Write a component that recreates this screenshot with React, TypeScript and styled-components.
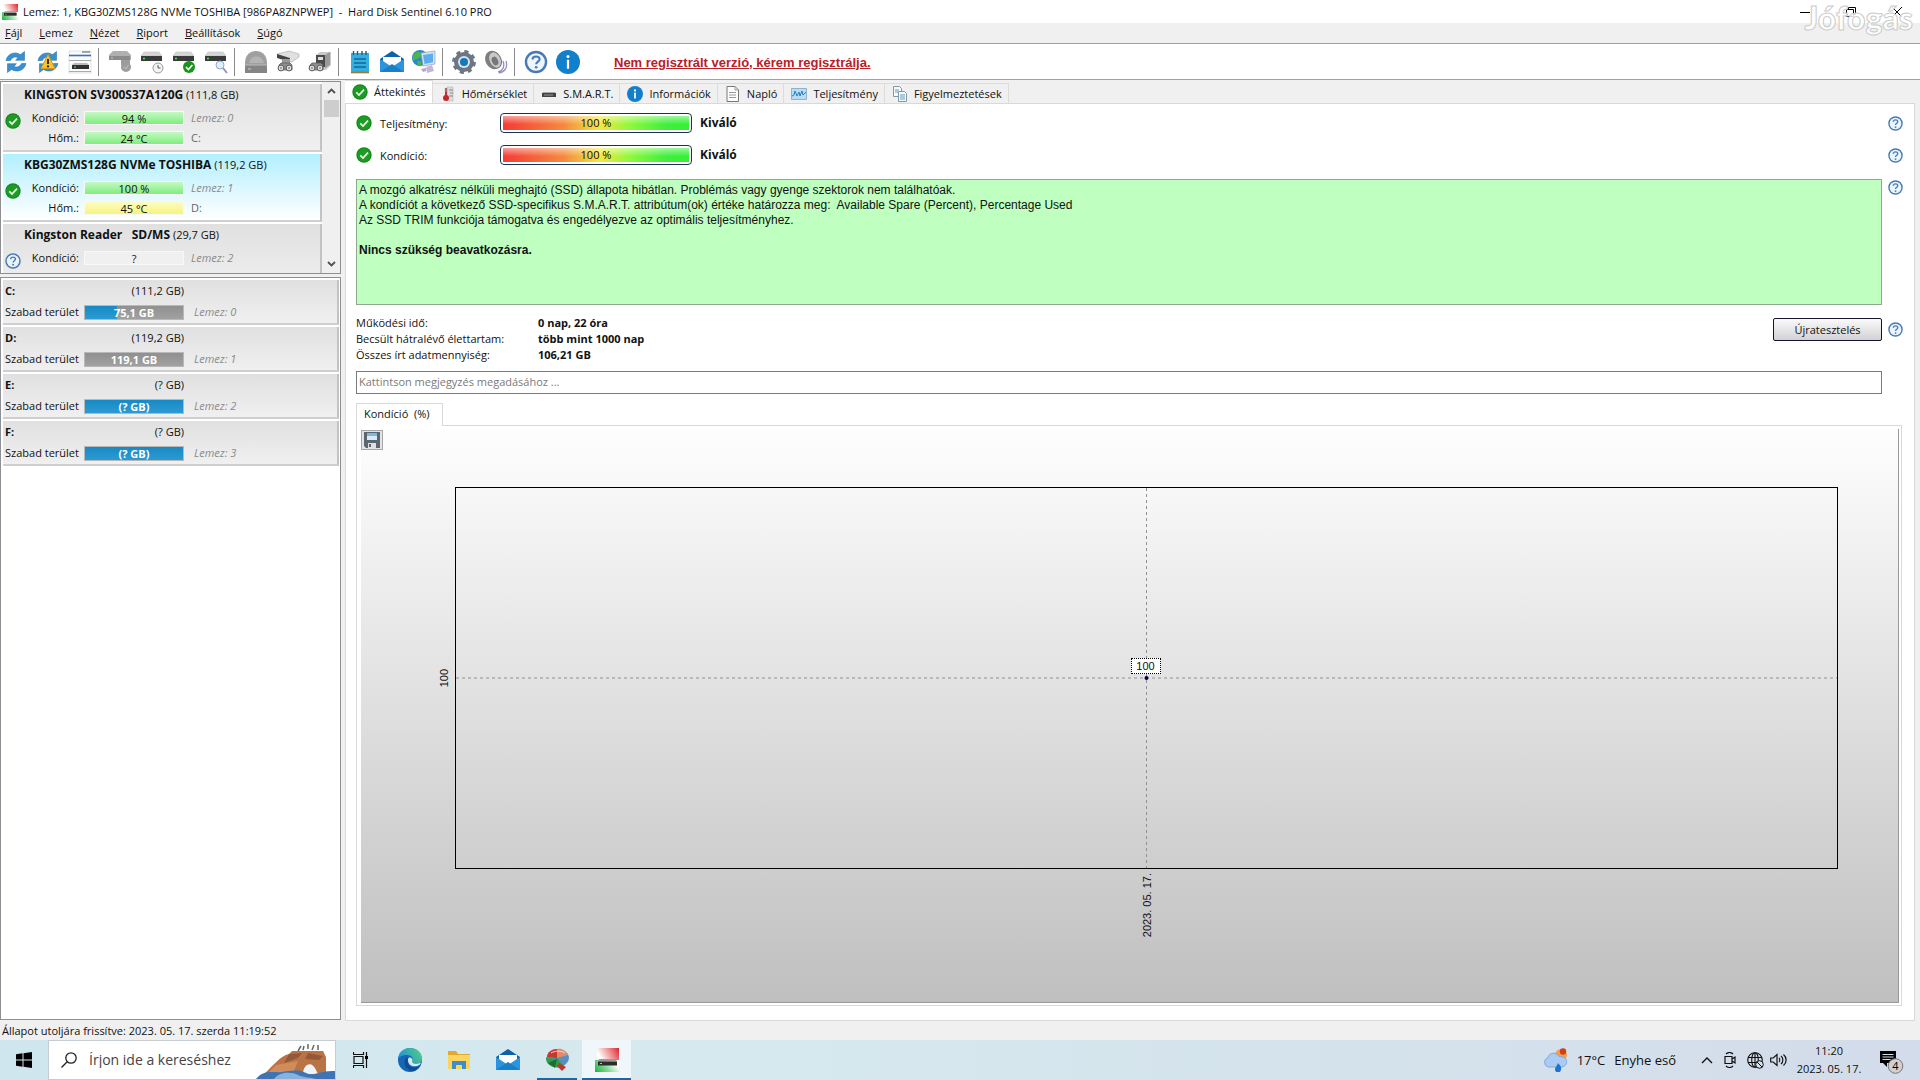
import React from 'react';
import styled, { createGlobalStyle, css } from 'styled-components';

const ui = '"Open Sans", "Noto Sans", sans-serif';
const arial = '"Liberation Sans", Arial, sans-serif';

const GlobalStyle = createGlobalStyle`
  * { box-sizing: border-box; }
  body { margin: 0; background: #f0f0f0; color: #111; font: 11px/16px ${ui}; }
  button, input { font: inherit; color: inherit; }
  ul, dl, dd, p { margin: 0; padding: 0; }
  ul { list-style: none; }
  svg { display: block; flex: none; }
`;

const Window = styled.div`
  display: flex;
  flex-direction: column;
  height: 100vh;
  position: relative;
`;

const PlainButton = styled.button`
  display: flex;
  align-items: center;
  justify-content: center;
  border: 0;
  padding: 0;
  background: none;
`;

/* ---------- title bar, menu, toolbar ---------- */

const TitleBar = styled.header`
  display: flex;
  align-items: center;
  height: 23px;
  padding-left: 2px;
  background: #fff;
`;

const Title = styled.h1`
  flex: 1;
  margin: 0;
  padding-left: 5px;
  font-size: 11px;
  font-weight: 400;
  white-space: pre;
`;

const WindowButton = styled(PlainButton)`
  width: 46px;
  height: 20px;
`;

const Watermark = styled.div`
  position: absolute;
  top: 0;
  right: 7px;
  font: 900 32px/36px Lato, sans-serif;
  color: rgba(255, 255, 255, 0.85);
  -webkit-text-stroke: 1px #cacaca;
  pointer-events: none;
`;

const MenuBar = styled.nav`
  display: flex;
  gap: 17px;
  height: 21px;
  padding: 0 5px;
  border-bottom: 1px solid #a0a0a0;
`;

const MenuButton = styled(PlainButton)``;

const Toolbar = styled.div`
  display: flex;
  align-items: center;
  height: 36px;
  background: #fff;
  border-bottom: 1px solid #a0a0a0;
`;

const ToolButton = styled(PlainButton)`
  width: 32px;
  height: 32px;
`;

const Separator = styled.span`
  width: 8px;
  height: 28px;
  background: linear-gradient(#8a8a8a, #8a8a8a) 2px 0 / 1px 100% no-repeat;
`;

const RegisterLink = styled.a`
  margin-left: 30px;
  padding-top: 2px;
  font: bold 13px/16px ${arial};
  color: #b92025;
`;

/* ---------- left column ---------- */

const Body = styled.div`
  display: flex;
  flex: 1;
  min-height: 0;
  gap: 4px;
`;

const Side = styled.aside`
  display: flex;
  flex-direction: column;
  gap: 3px;
  width: 341px;
  padding: 1px 0;
`;

const DiskPane = styled.section`
  display: flex;
  height: 193px;
  border: 1px solid #8e8f94;
  background: #fff;
`;

const VolumePane = styled.section`
  flex: 1;
  border: 1px solid #8e8f94;
  background: #fff;
  padding: 2px 1px 0 2px;
`;

const DiskList = styled.ul`
  flex: 1;
  overflow: hidden;
  padding: 2px 0 0 2px;
`;

const card = css`
  border-right: 2px solid #c3c3c3;
  border-bottom: 2px solid #cfcfcf;
`;

const Disk = styled.li<{ $selected?: boolean }>`
  ${card}
  height: 68px;
  margin-bottom: 2px;
  background: ${p => (p.$selected ? 'linear-gradient(#b2efff, #fff)' : 'linear-gradient(#e0e0e0, #f0f0f0)')};
`;

const DiskName = styled.div`
  padding: 2px 0 0 21px;
  height: 25px;
  line-height: 18px;
  white-space: pre;
`;

const DiskTitle = styled.strong`
  font-size: 12px;
`;

const DiskBody = styled.div`
  display: grid;
  grid-template-columns: 20px 55px 104px 1fr;
  grid-auto-rows: 20px;
  column-gap: 1px;
`;

const DiskIcon = styled.span`
  grid-row: 1 / 3;
  padding: 4px 0 0 2px;
`;

const FieldLabel = styled.span`
  text-align: right;
  line-height: 18px;
`;

const StatusBar = styled.span<{ $tone: 'good' | 'warm' | 'none' }>`
  height: 14px;
  margin: 2px 0 0 4px;
  text-align: center;
  border: 1px solid #f8f8f8;
  background: ${p =>
    p.$tone === 'good'
      ? 'linear-gradient(#c6f8c4, #7fee7e)'
      : p.$tone === 'warm'
      ? 'linear-gradient(#fcfcc4, #f7f47c)'
      : '#f0f0f0'};
  line-height: 13px;
`;

const DiskNote = styled.span<{ $letter?: boolean }>`
  padding-left: 6px;
  line-height: 18px;
  color: ${p => (p.$letter ? '#666' : '#8a8a8a')};
  font-style: ${p => (p.$letter ? 'normal' : 'italic')};
`;

const ScrollTrack = styled.div`
  display: flex;
  flex-direction: column;
  align-items: center;
  width: 18px;
  background: #f0f0f0;
`;

const ScrollThumb = styled.div`
  width: 15px;
  height: 17px;
  background: #cdcdcd;
`;

const ScrollButton = styled(PlainButton)<{ $end?: boolean }>`
  width: 17px;
  height: 18px;
  margin-top: ${p => (p.$end ? 'auto' : 0)};
`;

const Volume = styled.li`
  ${card}
  display: grid;
  grid-template-columns: 75px 100px 1fr;
  grid-template-rows: 20px 22px;
  align-items: center;
  column-gap: 4px;
  height: 45px;
  margin-bottom: 2px;
  padding: 1px 0 0 2px;
  background: linear-gradient(#e0e0e0, #f0f0f0);
`;

const Capacity = styled.span`
  text-align: right;
  grid-column: 2;
`;

const FreeBar = styled.span<{ $used: number }>`
  height: 15px;
  font-weight: 700;
  color: #fff;
  text-align: center;
  border: 1px solid #b8b8b8;
  line-height: 13px;
  background: ${p =>
    `linear-gradient(rgba(0, 0, 0, 0.06), rgba(255, 255, 255, 0.08)), linear-gradient(90deg, #1a92d0 ${p.$used}%, #999 ${p.$used}%)`};
`;

const VolumeNote = styled.span`
  padding-left: 6px;
  color: #8a8a8a;
  font-style: italic;
`;

/* ---------- right column ---------- */

const Main = styled.main`
  display: flex;
  flex-direction: column;
  flex: 1;
  min-width: 0;
  padding-right: 5px;
`;

const TabStrip = styled.div`
  display: flex;
  align-items: flex-end;
  height: 23px;
`;

const Tab = styled(PlainButton)<{ $active?: boolean }>`
  gap: 6px;
  padding: 0 6px 0 7px;
  height: ${p => (p.$active ? 23 : 20)}px;
  background: ${p => (p.$active ? '#fff' : 'none')};
  border: 1px solid #dcdcdc;
  border-width: 1px 1px 0 0;
`;

const Panel = styled.section`
  display: flex;
  flex-direction: column;
  flex: 1;
  min-height: 0;
  border: 1px solid #d9d9d9;
  background: #fff;
  padding: 9px 11px 14px 10px;
`;

const ScoreRow = styled.div`
  display: flex;
  align-items: center;
  height: 20px;
  margin-bottom: 12px;
`;

const ScoreName = styled.span`
  width: 128px;
  padding: 1px 0 0 8px;
`;

const Gauge = styled.div`
  width: 192px;
  height: 20px;
  padding: 2px;
  border: 1px solid #1c3050;
  border-radius: 4px;
`;

const GaugeFill = styled.div`
  height: 14px;
  line-height: 14px;
  text-align: center;
  background:
    linear-gradient(rgba(255, 255, 255, 0.5), rgba(255, 255, 255, 0) 60%),
    linear-gradient(90deg, #f43a35, #f58a40 33%, #f4e83c 52%, #90f83c 68%, #3fee3f 88%, #35f035);
`;

const ScoreWord = styled.strong`
  flex: 1;
  padding-left: 8px;
  font-size: 12px;
`;

const HelpRow = styled.div`
  display: grid;
  grid-template-columns: 1fr 15px;
  gap: 6px;
  align-items: start;
`;

const Report = styled.div`
  height: 126px;
  margin-top: 2px;
  padding: 3px 2px;
  border: 1px solid #8fa98f;
  background: #bfffbf;
  font: 12px/15px ${arial};
  white-space: pre-wrap;
`;

const HelpButton = styled(PlainButton)`
  width: 15px;
  height: 20px;
`;

const Facts = styled.div`
  display: flex;
  justify-content: space-between;
  align-items: flex-start;
  margin-top: 10px;
`;

const FactList = styled.dl`
  display: grid;
  grid-template-columns: 182px auto;
`;

const FactValue = styled.dd`
  font-weight: 700;
`;

const FactSide = styled.div`
  display: flex;
  align-items: center;
  gap: 6px;
  padding-top: 3px;
`;

const RetestButton = styled(PlainButton)`
  width: 109px;
  height: 23px;
  border: 1px solid #14142e;
  border-radius: 2px;
  background: linear-gradient(#fafafa, #d2d2d6);
`;

const Comment = styled.input`
  height: 23px;
  margin: 8px 21px 0 0;
  padding: 0 2px 2px;
  border: 1px solid #7a7a7a;
  border-radius: 0;
  background: #fff;
  &::placeholder { color: #7a7a7a; opacity: 1; }
`;

const ChartTab = styled(PlainButton)`
  align-self: flex-start;
  justify-content: flex-start;
  height: 23px;
  width: 87px;
  margin: 9px 0 -1px;
  padding: 0 0 2px 7px;
  border: 1px solid #d9d9d9;
  border-bottom: 0;
  background: #fff;
  white-space: pre;
  position: relative;
`;

const ChartFrame = styled.div`
  display: flex;
  flex: 1;
  min-height: 0;
  margin-right: 1px;
  padding: 3px 2px 2px 4px;
  border: 1px solid #d9d9d9;
`;

const Chart = styled.div`
  display: grid;
  flex: 1;
  grid-template-columns: 94px 1fr 60px;
  grid-template-rows: 58px 1fr 133px;
  border: 1px solid #999;
  border-width: 0 1px 1px 0;
  background: linear-gradient(#fefefe, #bfbfbf);
  font-family: ${arial};
`;

const SaveButton = styled(PlainButton)`
  width: 22px;
  height: 20px;
  margin-top: 1px;
  border: 1px solid #a6a6a6;
  background: #e4e4e4;
`;

const AxisY = styled.span`
  grid-area: 2 / 1;
  place-self: center end;
  writing-mode: vertical-rl;
  transform: rotate(180deg);
  margin-right: 3px;
`;

const AxisX = styled.span`
  grid-area: 3 / 2;
  place-self: start center;
  writing-mode: vertical-rl;
  transform: rotate(180deg);
  margin-top: 4px;
`;

const Plot = styled.div`
  grid-area: 2 / 2;
  position: relative;
  border: 1px solid #000;
`;

const PointLabel = styled.span`
  position: absolute;
  left: 50%;
  bottom: 50%;
  width: 30px;
  height: 16px;
  margin: 0 0 4px -16px;
  border: 1px dotted #000;
  background: #fff;
  line-height: 14px;
  text-align: center;
`;

const StatusLine = styled.footer`
  height: 19px;
  padding: 0 2px;
  line-height: 20px;
`;

/* ---------- taskbar ---------- */

const Taskbar = styled.footer`
  display: flex;
  height: 40px;
  background: linear-gradient(90deg, #d0e6ef, #d6e9ee 40%, #d3dcea);
`;

const StartButton = styled(PlainButton)`
  width: 48px;
`;

const Search = styled.label`
  display: flex;
  align-items: center;
  width: 288px;
  padding-left: 12px;
  gap: 12px;
  border: 1px solid #c6cdd2;
  background: #fff;
`;

const SearchInput = styled.input`
  flex: 1;
  min-width: 0;
  border: 0;
  padding: 0;
  outline: 0;
  background: none;
  font-size: 14px;
  &::placeholder { color: #444; opacity: 1; }
`;

const TaskButton = styled(PlainButton)<{ $state?: 'open' | 'active' }>`
  width: 49px;
  background: ${p => (p.$state === 'active' ? '#f0f7fa' : 'none')};
  ${p => p.$state && css`box-shadow: inset 0 -2px #1668ad;`}
  ${p => p.$state === 'open' && css`width: 40px; margin: 0 5px;`}
`;

const Tray = styled.div`
  display: flex;
  align-items: center;
  margin-left: auto;
`;

const Weather = styled(PlainButton)`
  gap: 9px;
  margin-right: 19px;
  font-size: 13px;
`;

const TrayButton = styled(PlainButton)`
  width: 24px;
  height: 40px;
`;

const Clock = styled.time`
  width: 76px;
  text-align: center;
  font-size: 11px;
  line-height: 18px;
`;

const NoticeButton = styled(PlainButton)`
  width: 48px;
  height: 40px;
  margin-right: 5px;
`;

/* ---------- icons ---------- */

const Check = ({ size = 16 }: { size?: number }) => (
  <svg width={size} height={size} viewBox="0 0 16 16">
    <circle cx="8" cy="8" r="7.7" fill="#128a1a" />
    <circle cx="8" cy="8" r="6.6" fill="#1f9a25" />
    <path d="M4.3 8.3 7 11l5-5.3" fill="none" stroke="#e8ffe8" strokeWidth="1.7" />
  </svg>
);

const Help = ({ size = 15 }: { size?: number }) => (
  <svg width={size} height={size} viewBox="0 0 16 16">
    <circle cx="8" cy="8" r="7" fill="#eaf4fd" stroke="#4a7ab5" strokeWidth="1.5" />
    <path d="M5.7 6.2C5.7 3.4 10.4 3.5 10.4 6.1 10.4 7.8 8.1 7.8 8.1 9.6" fill="none" stroke="#4a7ab5" strokeWidth="1.4" />
    <circle cx="8.1" cy="11.8" r=".95" fill="#4a7ab5" />
  </svg>
);

const Info = ({ size = 16 }: { size?: number }) => (
  <svg width={size} height={size} viewBox="0 0 16 16">
    <circle cx="8" cy="8" r="8" fill="#127fcb" />
    <circle cx="8" cy="4.4" r="1.1" fill="#fff" />
    <path d="M8 6.6v5.8" stroke="#fff" strokeWidth="1.7" />
  </svg>
);

const AppIcon = ({ size = 16 }: { size?: number }) => (
  <svg width={size} height={size} viewBox="0 0 24 24">
    <defs>
      <linearGradient id="appRed" x1="1" y1="0" x2="0" y2=".3">
        <stop offset="0" stopColor="#dc2430" /><stop offset=".45" stopColor="#ee8a8c" /><stop offset="1" stopColor="#fff" />
      </linearGradient>
      <linearGradient id="appGreen" x1="0" y1="1" x2="1" y2=".6">
        <stop offset="0" stopColor="#18b33c" /><stop offset=".5" stopColor="#7fd894" /><stop offset="1" stopColor="#fff" />
      </linearGradient>
    </defs>
    <path d="M2 0h22v12H2z" fill="url(#appRed)" />
    <path d="M0 12h24v12H0z" fill="url(#appGreen)" />
    <path d="M4 11h17l1 2.500H3z" fill="#999" />
    <path d="M3 13.500h19v4H3z" fill="#2c2c2c" />
    <path d="M5 15.500h2" stroke="#5f5" />
  </svg>
);

const SyncArrows = () => (
  <>
    <path d="M2 10.500C3.500 3.500 11 1 16.500 4.600L20.500 1.500V10.300H11.600L14 7.600C10.800 6.200 8 7.500 6.500 10.500Z" fill="#3b8fce" stroke="#2a78b5" strokeWidth=".6" />
    <path d="M22 13.500C20.500 20.500 13 23 7.500 19.400L3.500 22.500V13.700h8.900L10 16.400c3.200 1.400 6 .1 7.500-2.900Z" fill="#3b8fce" stroke="#2a78b5" strokeWidth=".6" />
  </>
);

const Drive = () => (
  <g transform="translate(0 2)">
    <path d="M4 0h15l3 4H1z" fill="#d6d6d6" stroke="#b5b5b5" strokeWidth=".5" />
    <path d="M1 4h21v5H1z" fill="#3a3a3a" />
    <path d="M3 6.500h2" stroke="#55e055" strokeWidth="1.400" />
  </g>
);

const Cam = ({ x = 2 }: { x?: number }) => (
  <g transform={`translate(${x} 0)`}>
    <path d="M1 15l2-2h9l2 2v5H1z" fill="#8f8f8f" stroke="#555" strokeWidth=".7" />
    <circle cx="3" cy="18" r="2.900" fill="#e2e2e2" stroke="#555" />
    <circle cx="11" cy="18" r="2.900" fill="#e2e2e2" stroke="#555" />
    <circle cx="3" cy="18" r="1" fill="#888" />
    <circle cx="11" cy="18" r="1" fill="#888" />
  </g>
);

const Mail = () => (
  <>
    <path d="M0 9 12 1l12 8v13H0z" fill="#0f62a8" />
    <path d="M3 7h18v9H3z" fill="#fff" />
    <path d="M0 9l12 8 12-8v13H0z" fill="#2a94dc" />
    <path d="M0 22l12-8 12 8z" fill="#1a7fc9" />
  </>
);

const toolGroups: [string, React.ReactNode][][] = [
  [
    ['Frissítés', <SyncArrows />],
    ['Figyelmeztetés frissítése', <><SyncArrows /><path d="M12 4.500 19 18.500H5z" fill="#f7c331" stroke="#d89a12" /><path d="M12 9v5" stroke="#222" strokeWidth="1.800" /><circle cx="12" cy="16.400" r="1.100" fill="#222" /></>],
    ['Ablak', <><path d="M1 1h22v22H1z" fill="#fafafa" stroke="#d0d0d0" strokeWidth=".6" /><path d="M1 5.500h22" stroke="#2f74c0" strokeWidth="1.600" /><path d="M14 2h8" stroke="#555" /><path d="M4 15h17v4H4z" fill="#303030" /><path d="M4 15l2-2h13l2 2z" fill="#bbb" /><path d="M6 17h2" stroke="#5e5" /><path d="M1 10.500h22M1 21.500h22" stroke="#aaa" /></>],
  ],
  [
    ['Lemez leállítása', <><path d="M5 1h14l4 4v5H1V5z" fill="#b0b0b0" /><path d="M1 6h21v4H1z" fill="#8b8b8b" /><path d="M3 8h2" stroke="#ccc" /><path d="M13 10h9v5h-9z" fill="#9c9c9c" /><circle cx="18" cy="17" r="5" fill="#9c9c9c" /><path d="m15.500 17 2 2 3-4" stroke="#c4c4c4" fill="none" /></>],
    ['Ütemezett teszt', <><Drive /><circle cx="18" cy="18" r="5" fill="#f4f4f4" stroke="#999" /><path d="M18 15v3h2.500" fill="none" stroke="#555" /></>],
    ['Lemez ellenőrzése', <><Drive /><circle cx="17" cy="17" r="6" fill="#17951d" /><path d="m14 17 2.400 2.500 4-4.500" fill="none" stroke="#fff" strokeWidth="1.600" /></>],
    ['Felület vizsgálata', <><Drive /><circle cx="16" cy="15" r="4" fill="#dff0fb" stroke="#88aecb" /><path d="m19 18 4 5" stroke="#9b8ec4" strokeWidth="2" /></>],
  ],
  [
    ['Lemezkép', <><path d="M1 13C1 5 6 1 12 1s11 4 11 12v10H1z" fill="#a0a0a0" /><path d="M6 11c1-5 9-6 12-2l2 4H5z" fill="#b4b4b4" /><path d="M1 15h22v8H1z" fill="#858585" /><path d="M1 15h22" stroke="#bbb" /><path d="M4 19h3" stroke="#ccc" /></>],
    ['Vizsgálat', <><path d="m1 4 12-3 10 3v3l-7 5-3-1z" fill="#e0e0e0" stroke="#aaa" strokeWidth=".6" /><path d="m1 4 13 4v4L1 8z" fill="#444" /><path d="M6 9h8v5H6z" fill="#999" /><Cam /></>],
    ['Részletes vizsgálat', <><path d="m8 5 4-3h11v13l-5 5H8z" fill="#c9c9c9" /><path d="M8 5h9v12H8z" fill="#4a4a4a" /><path d="m17 5 5-3v13l-5 3z" fill="#9a9a9a" /><path d="M10 7h5v3h-5z" fill="#ddd" /><Cam x={1} /></>],
  ],
  [
    ['Jelentés', <><path d="M3 3h18v20H3z" fill="#35afe0" /><path d="M5.500 1v4M9.500 1v4M14 1v4M18 1v4" stroke="#175f86" strokeWidth="1.400" /><path d="M6 9h12M6 13h12M6 17h12" stroke="#0f6a98" strokeWidth="1.600" /><path d="M3 21.500h18v1.800H3z" fill="#9a7a40" /></>],
    ['Levél küldése', <Mail />],
    ['Hálózat', <><circle cx="8" cy="8" r="8" fill="#2c86cf" /><path d="M3 3c4-3 7 0 6 3S3 9 1 11C0 7 1 5 3 3M5 11c3-1 5 0 4 4l-3 1z" fill="#4bb64b" /><path d="m9 3 14-2v13l-12 2z" fill="#d4e2ee" stroke="#8ba2b8" strokeWidth=".7" /><path d="m11 5 10-1.500v8.700L12.500 14z" fill="#5aaeee" /><path d="m14 17 6-2 2 6-7 2z" fill="#c4b8d8" /><path d="m9 19 5-1v3l-3 1z" fill="#b0a8cc" /></>],
  ],
  [
    ['Beállítások', <><circle cx="12" cy="12" r="7.500" fill="#fff" stroke="#6d7783" strokeWidth="5" /><circle cx="12" cy="12" r="10.300" fill="none" stroke="#6d7783" strokeWidth="3.200" strokeDasharray="4.100 3.990" /><circle cx="12" cy="12" r="6" fill="#d7e4ef" /><circle cx="12" cy="12" r="4" fill="#1576bd" /></>],
    ['Hang', <><path d="M19 11c2 5 0 10-5 11M22 11c2 6-1 11-7 12" stroke="#9a8cc0" strokeWidth="1.300" fill="none" /><ellipse cx="9" cy="10" rx="7.500" ry="9.500" fill="#7f7f7f" transform="rotate(-25 9 10)" /><ellipse cx="11" cy="10" rx="6" ry="8.500" fill="#c8c8c8" stroke="#777" transform="rotate(-25 11 10)" /><ellipse cx="11" cy="11" rx="3" ry="4.500" fill="#777" transform="rotate(-25 11 11)" /></>],
  ],
  [
    ['Súgó', <g transform="scale(1.5)"><circle cx="8" cy="8" r="6.700" fill="#eef5fc" stroke="#4a7ab5" strokeWidth="1.600" /><path d="M5.700 6.400C5.700 3.600 10.400 3.700 10.400 6.200 10.400 7.800 8.100 7.800 8.100 9.500" fill="none" stroke="#4a7ab5" strokeWidth="1.400" /><circle cx="8.100" cy="11.500" r=".9" fill="#4a7ab5" /></g>],
    ['Névjegy', <g transform="scale(1.5)"><circle cx="8" cy="8" r="8" fill="#127fcb" /><circle cx="8" cy="4.400" r="1" fill="#fff" /><path d="M8 6.500v6" stroke="#fff" strokeWidth="1.500" /></g>],
  ],
];

const tabs: [string, React.ReactNode][] = [
  ['Hőmérséklet', <svg width="16" height="16" viewBox="0 0 16 16"><path d="M7 1h6v14H7z" fill="#dcdcdc" stroke="#aaa" strokeWidth=".5" /><path d="M9 4h4M10 7h3M9 10h4" stroke="#888" /><path d="M6 2v8" stroke="#a86a6a" strokeWidth="2.200" /><circle cx="6" cy="12" r="3" fill="#c5262b" /><path d="M6 6v5" stroke="#c5262b" strokeWidth="1.500" /></svg>],
  ['S.M.A.R.T.', <svg width="16" height="16" viewBox="0 0 16 16"><path d="M2 6h12l1 1.500H1z" fill="#aaa" /><path d="M1 7h14v4H1z" fill="#444" /><path d="M3 9h9" stroke="#999" /></svg>],
  ['Információk', <Info />],
  ['Napló', <svg width="16" height="16" viewBox="0 0 16 16"><path d="M2 .500h8l3.500 3.500v11.500H2z" fill="#fff" stroke="#777" /><path d="M10 .500V4h3.500M4 6.500h7M4 9h7M4 11.500h7" fill="none" stroke="#999" /></svg>],
  ['Teljesítmény', <svg width="16" height="16" viewBox="0 0 16 16"><path d="M.5 2.500h15v11H.5z" fill="#b9dcf5" stroke="#8ab4d4" /><path d="m1 10 2-1 1-4 2 5 2-4 1 4 2-5 1 4 3-3" fill="none" stroke="#2a7fc0" /></svg>],
  ['Figyelmeztetések', <svg width="16" height="16" viewBox="0 0 16 16"><path d="M1.500.500h6l2 2v8h-8z" fill="#f6fafc" stroke="#7a99ac" /><path d="M6.500 5.500h6l2 2v8h-8z" fill="#f6fafc" stroke="#7a99ac" /><path d="M3 4h4M3 6h3M8 9h5M8 11h5M8 13h5" stroke="#6a9ab8" /></svg>],
];

const disks = [
  { name: 'KINGSTON SV300S37A120G', size: '(111,8 GB)', health: '94 %', temp: '24 °C', tone: 'good', n: 0, letter: 'C:' },
  { name: 'KBG30ZMS128G NVMe TOSHIBA', size: '(119,2 GB)', health: '100 %', temp: '45 °C', tone: 'warm', n: 1, letter: 'D:' },
  { name: 'Kingston Reader   SD/MS', size: '(29,7 GB)', health: '?', n: 2 },
] as const;

const volumes = [
  { letter: 'C:', size: '(111,2 GB)', free: '75,1 GB', used: 33 },
  { letter: 'D:', size: '(119,2 GB)', free: '119,1 GB', used: 0 },
  { letter: 'E:', size: '(? GB)', free: '(? GB)', used: 100 },
  { letter: 'F:', size: '(? GB)', free: '(? GB)', used: 100 },
];

const facts = [
  ['Működési idő:', '0 nap, 22 óra'],
  ['Becsült hátralévő élettartam:', 'több mint 1000 nap'],
  ['Összes írt adatmennyiség:', '106,21 GB'],
];

const HelpLink = () => <HelpButton aria-label="Súgó"><Help /></HelpButton>;

const Chevron = ({ down }: { down?: boolean }) => (
  <svg width="9" height="6" viewBox="0 0 9 6">
    <path d={down ? 'M1 1l3.500 3.500L8 1' : 'M1 5l3.500-3.500L8 5'} fill="none" stroke="#505050" strokeWidth="1.800" />
  </svg>
);

export default function App() {
  return (
    <Window>
      <GlobalStyle />
      <TitleBar>
        <AppIcon />
        <Title>{'Lemez: 1, KBG30ZMS128G NVMe TOSHIBA [986PA8ZNPWEP]  -  Hard Disk Sentinel 6.10 PRO'}</Title>
        <WindowButton aria-label="Kis méret"><svg width="10" height="10"><path d="M0 5.500h10" stroke="#000" /></svg></WindowButton>
        <WindowButton aria-label="Előző méret"><svg width="10" height="10"><path d="M.5 2.500h7v7h-7zM2.500 2V.500h7v7H8" fill="none" stroke="#000" /></svg></WindowButton>
        <WindowButton aria-label="Bezárás"><svg width="10" height="10"><path d="m0 0 10 10M10 0 0 10" stroke="#000" /></svg></WindowButton>
      </TitleBar>
      <MenuBar>
        {['Fájl', 'Lemez', 'Nézet', 'Riport', 'Beállítások', 'Súgó'].map(m => (
          <MenuButton key={m}><span><u>{m[0]}</u>{m.slice(1)}</span></MenuButton>
        ))}
      </MenuBar>
      <Toolbar>
        {toolGroups.map((group, i) => (
          <React.Fragment key={i}>
            {i > 0 && <Separator />}
            {group.map(([label, art]) => (
              <ToolButton key={label} aria-label={label}>
                <svg width="24" height="24" viewBox="0 0 24 24">{art}</svg>
              </ToolButton>
            ))}
          </React.Fragment>
        ))}
        <RegisterLink href="#register">Nem regisztrált verzió, kérem regisztrálja.</RegisterLink>
      </Toolbar>

      <Body>
        <Side>
          <DiskPane>
            <DiskList>
              {disks.map(d => (
                <Disk key={d.n} $selected={d.n === 1}>
                  <DiskName><DiskTitle>{d.name}</DiskTitle> {d.size}</DiskName>
                  <DiskBody>
                    <DiskIcon>{d.health === '?' ? <Help size={16} /> : <Check />}</DiskIcon>
                    <FieldLabel>Kondíció:</FieldLabel>
                    <StatusBar $tone={d.health === '?' ? 'none' : 'good'}>{d.health}</StatusBar>
                    <DiskNote>Lemez: {d.n}</DiskNote>
                    {'temp' in d && (
                      <>
                        <FieldLabel>Hőm.:</FieldLabel>
                        <StatusBar $tone={d.tone}>{d.temp}</StatusBar>
                        <DiskNote $letter>{d.letter}</DiskNote>
                      </>
                    )}
                  </DiskBody>
                </Disk>
              ))}
            </DiskList>
            <ScrollTrack>
              <ScrollButton aria-label="Fel"><Chevron /></ScrollButton>
              <ScrollThumb />
              <ScrollButton $end aria-label="Le"><Chevron down /></ScrollButton>
            </ScrollTrack>
          </DiskPane>
          <VolumePane>
            <ul>
              {volumes.map((v, i) => (
                <Volume key={v.letter}>
                  <b>{v.letter}</b>
                  <Capacity>{v.size}</Capacity>
                  <span />
                  <span>Szabad terület</span>
                  <FreeBar $used={v.used}>{v.free}</FreeBar>
                  <VolumeNote>Lemez: {i}</VolumeNote>
                </Volume>
              ))}
            </ul>
          </VolumePane>
        </Side>

        <Main>
          <TabStrip role="tablist">
            <Tab $active role="tab" aria-selected><Check />Áttekintés</Tab>
            {tabs.map(([label, icon]) => (
              <Tab key={label} role="tab" aria-selected={false}>{icon}{label}</Tab>
            ))}
          </TabStrip>
          <Panel>
            {['Teljesítmény:', 'Kondíció:'].map(s => (
              <ScoreRow key={s}>
                <Check />
                <ScoreName>{s}</ScoreName>
                <Gauge><GaugeFill>100 %</GaugeFill></Gauge>
                <ScoreWord>Kiváló</ScoreWord>
                <HelpLink />
              </ScoreRow>
            ))}
            <HelpRow>
              <Report>
                <p>A mozgó alkatrész nélküli meghajtó (SSD) állapota hibátlan. Problémás vagy gyenge szektorok nem találhatóak.</p>
                <p>{'A kondíciót a következő SSD-specifikus S.M.A.R.T. attribútum(ok) értéke határozza meg:  Available Spare (Percent), Percentage Used'}</p>
                <p>Az SSD TRIM funkciója támogatva és engedélyezve az optimális teljesítményhez.</p>
                <br />
                <b>Nincs szükség beavatkozásra.</b>
              </Report>
              <HelpLink />
            </HelpRow>
            <Facts>
              <FactList>
                {facts.map(([k, v]) => (
                  <React.Fragment key={k}><dt>{k}</dt><FactValue>{v}</FactValue></React.Fragment>
                ))}
              </FactList>
              <FactSide>
                <RetestButton>Újratesztelés</RetestButton>
                <HelpLink />
              </FactSide>
            </Facts>
            <Comment aria-label="Megjegyzés" placeholder="Kattintson megjegyzés megadásához ..." />
            <ChartTab>{'Kondíció  (%)'}</ChartTab>
            <ChartFrame>
              <Chart>
                <SaveButton aria-label="Mentés">
                  <svg width="16" height="16" viewBox="0 0 16 16">
                    <path d="M0 0h16v16H2l-2-2z" fill="#5c6670" />
                    <path d="M3 1h10v7H3z" fill="#d9ebf7" />
                    <path d="M3 1h10v3H3z" fill="#7db9e2" />
                    <path d="M4 11h8v5H4z" fill="#e0e0e0" />
                    <path d="M5 12h2v3H5z" fill="#5c6670" />
                  </svg>
                </SaveButton>
                <AxisY>100</AxisY>
                <Plot>
                  <svg width="100%" height="100%">
                    <line x1="0" y1="50%" x2="100%" y2="50%" stroke="#909090" strokeDasharray="3 3" />
                    <line x1="50%" y1="0" x2="50%" y2="100%" stroke="#909090" strokeDasharray="3 3" />
                    <circle cx="50%" cy="50%" r="2" fill="#00004a" />
                  </svg>
                  <PointLabel>100</PointLabel>
                </Plot>
                <AxisX>2023. 05. 17.</AxisX>
              </Chart>
            </ChartFrame>
          </Panel>
        </Main>
      </Body>
      <StatusLine>Állapot utoljára frissítve: 2023. 05. 17. szerda 11:19:52</StatusLine>

      <Taskbar>
        <StartButton aria-label="Start">
          <svg width="16" height="16" viewBox="0 0 16 16"><path d="m0 2.200 6.500-.9v6.200H0zM7.500 1.200 16 0v7.500H7.500zM0 8.500h6.500v6.200L0 13.800zM7.500 8.500H16V16l-8.500-1.200z" /></svg>
        </StartButton>
        <Search>
          <svg width="16" height="16" viewBox="0 0 16 16"><circle cx="10" cy="6" r="5.200" fill="none" stroke="#222" strokeWidth="1.300" /><path d="m6.200 9.800-5.700 5.700" stroke="#222" strokeWidth="1.300" /></svg>
          <SearchInput aria-label="Keresés" placeholder="Írjon ide a kereséshez" />
          <svg width="79" height="38" viewBox="0 0 79 38">
            <path d="M8 33C18 24 24 15 33 13L36 10h31l3 6v16l-14 4z" fill="#b97345" />
            <path d="M33 13 46 12 42 17 28 22zM52 12l15 3-4 4-14-1z" fill="#94583a" />
            <path d="M20 24 42 20 38 30 12 32z" fill="#d08c5a" />
            <path d="M47 33c0-10 9-14 13-4l2 4z" fill="#eef4f8" />
            <path d="m42 10 3-5M47 9l1-4M52 8V3M56 9l2-5M62 9V4" stroke="#666" strokeWidth="1.500" />
            <path d="M0 38C8 28 18 32 26 31S42 28 50 32s14-3 29-2v8z" fill="#3f74b4" />
            <path d="M18 38c6-8 18-7 24-4s12 2 18 4z" fill="#86b3dc" />
          </svg>
        </Search>
        <TaskButton aria-label="Feladatnézet">
          <svg width="16" height="16" viewBox="0 0 16 16"><path d="M1 4.500h9v7H1zM.5 0v2.500h10V0M.5 16v-2.500h10V16M13.500 0v16" fill="none" stroke="#111" strokeWidth="1.200" /><path d="M12 4h3v3h-3z" /></svg>
        </TaskButton>
        <TaskButton aria-label="Edge">
          <svg width="24" height="24" viewBox="0 0 24 24">
            <defs><linearGradient id="edge" x1="0" y1=".4" x2="1" y2="0"><stop offset="0" stopColor="#2193d8" /><stop offset="1" stopColor="#57d17a" /></linearGradient></defs>
            <circle cx="12" cy="12" r="12" fill="#1566b4" />
            <path d="M0 11C1 4 6 0 12 0c7 0 12 5 12 10 0 4-3 6-6 6-4 0-5-2-4-3 2-3-1-6-5-6-5 0-8 2-9 4" fill="url(#edge)" />
            <path d="M9 9c-5 4-2 12 4 14 4 .5 7-2 9-5-5 3-14 1-12-6z" fill="#0d4d96" />
            <path d="M11 9.500c-2 2-1 6 2 8 3 1.500 6 1 9-1l1-2c-3 2-9 2-9-1 1-2 0-4-3-4" fill="#d6e9ee" />
          </svg>
        </TaskButton>
        <TaskButton aria-label="Fájlkezelő">
          <svg width="22" height="20" viewBox="0 0 22 20"><path d="M0 1h8l2 3h12v15H0z" fill="#e3a92c" /><path d="M0 5h22v14H0z" fill="#fbd560" /><path d="M4 19v-8h14v8h-4v-4H8v4z" fill="#3c8fc9" /></svg>
        </TaskButton>
        <TaskButton aria-label="Posta"><svg width="24" height="24" viewBox="0 0 24 24"><Mail /></svg></TaskButton>
        <TaskButton $state="open" aria-label="Lemezkezelő">
          <svg width="24" height="24" viewBox="0 0 24 24">
            <ellipse cx="13" cy="10" rx="11" ry="9" fill="#5a8fc4" />
            <path d="M2 9C2 4 7 1 12 1v9z" fill="#c6372f" /><path d="M12 1c5-1 9 2 11 6l-11 3z" fill="#e08a6a" />
            <path d="M1 9c3 2 8 2 11 1l7 8C11 22 0 18 1 9" fill="#2e9e48" />
            <path d="M3 15l9-4-2 9z" fill="#1e6e34" />
            <path d="m14 15 7 4-4 4-5-5z" fill="#b43a32" />
            <path d="M6 5c3-2 10-3 14 0" fill="none" stroke="#f3dcd0" />
          </svg>
        </TaskButton>
        <TaskButton $state="active" aria-label="Hard Disk Sentinel"><AppIcon size={24} /></TaskButton>

        <Tray>
          <Weather>
            <svg width="25" height="24" viewBox="0 0 25 24"><circle cx="18" cy="7" r="6" fill="#f3a04b" /><circle cx="20" cy="3.500" r="3.200" fill="#cf3f1c" /><path d="M5 19a5 5 0 0 1 0-9.500C6 4 14 4 16 8.500c6 0 8 3 7.500 6S21 19 18 19z" fill="#a9cbf4" stroke="#7fa9de" /><path d="M15 15c3 3 3.500 5 3 6.500a3 3 0 0 1-6-.500c0-2 2-3 3-6" fill="#1c74cf" /></svg>
            <span>17°C</span><span>Enyhe eső</span>
          </Weather>
          <TrayButton aria-label="Rejtett ikonok"><svg width="12" height="8"><path d="m1 7 5-5 5 5" fill="none" stroke="#111" strokeWidth="1.400" /></svg></TrayButton>
          <TrayButton aria-label="Értekezlet"><svg width="14" height="16" viewBox="0 0 14 16"><path d="M1 4.500h7v7H1zM8 7l3-2v6L8 9M2 2c2-2 5-2 7 0M2 14c2 2 5 2 7 0" fill="none" stroke="#111" strokeWidth="1.200" /></svg></TrayButton>
          <TrayButton aria-label="Hálózat"><svg width="17" height="17" viewBox="0 0 17 17"><g fill="none" stroke="#111" strokeWidth="1.100"><circle cx="8" cy="8" r="7.300" /><ellipse cx="8" cy="8" rx="3.300" ry="7.300" /><path d="M1 5.500h14M1 10.500h14M8 .7v14.600" /></g><circle cx="12.500" cy="12.500" r="3.800" fill="#d5e1ea" stroke="#111" /><path d="m10 10 5 5" stroke="#111" /></svg></TrayButton>
          <TrayButton aria-label="Hangerő"><svg width="18" height="14" viewBox="0 0 18 14"><path d="M.7 5v4h2.500L7 12.500v-11L3.200 5zM9 5c1 1 1 3 0 4M11 3c2.500 2 2.500 6 0 8M13.500 1.500c3.500 3 3.500 8 0 11" fill="none" stroke="#111" strokeWidth="1.200" /></svg></TrayButton>
          <Clock>11:20<br />2023. 05. 17.</Clock>
          <NoticeButton aria-label="Értesítések">
            <svg width="28" height="28" viewBox="0 0 28 28">
              <path d="M3 5h16v12h-9v4l-4-4H3z" fill="#000" /><path d="M5.500 8.500h11M5.500 11h11M5.500 13.500h8" stroke="#d3dcea" />
              <circle cx="18.500" cy="20" r="7.300" fill="#d0d0d0" stroke="#777" />
              <text x="18.500" y="24" textAnchor="middle" fontSize="11" fontFamily="Open Sans, sans-serif">4</text>
            </svg>
          </NoticeButton>
        </Tray>
      </Taskbar>
      <Watermark>Jófogás</Watermark>
    </Window>
  );
}
